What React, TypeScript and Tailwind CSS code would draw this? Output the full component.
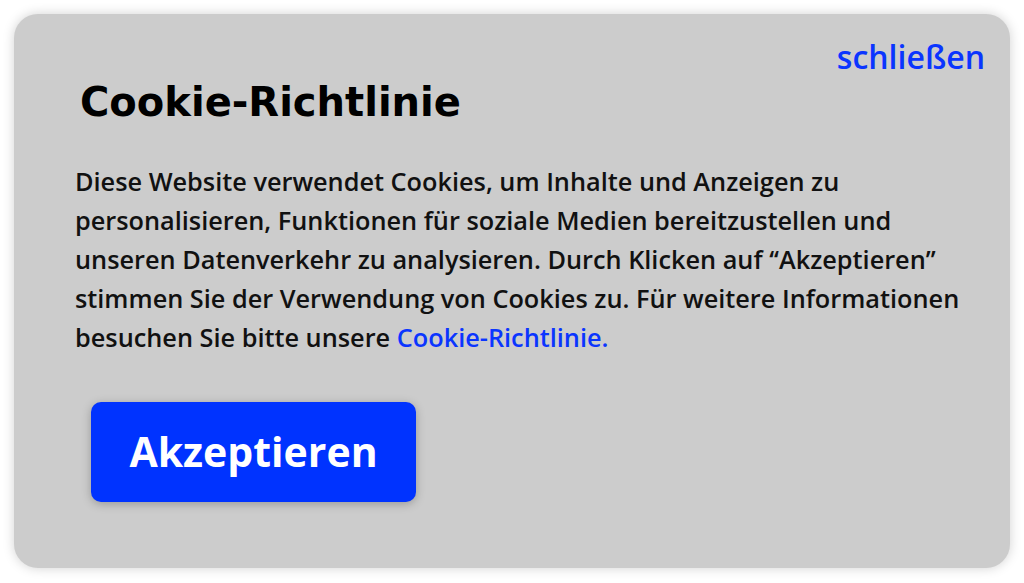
import React from "react";

const sans = { fontFamily: "'Open Sans', Lato, sans-serif" };
const wide = { fontFamily: "'DejaVu Sans', Verdana, sans-serif" };

const CookieBanner = () => (
  <div className="min-h-screen bg-white p-[14px]" style={sans}>
    <section className="h-[554px] rounded-[24px] bg-[#cccccc] shadow-[0_0_12px_rgba(0,0,0,0.18)] flex flex-col pl-[61px] pr-[25px] pt-[23px]">
      {/* Close */}
      <div className="flex justify-end">
        <button className="text-[32px] leading-[40px] text-[#0a35ff] font-semibold">
          schließen
        </button>
      </div>

      {/* Title */}
      <h1
        className="mt-[1px] pl-[5px] text-[40px] leading-[48px] font-bold text-black"
        style={wide}
      >
        Cookie-Richtlinie
      </h1>

      {/* Body */}
      <p className="mt-[36px] text-[25.3px] leading-[39px] font-semibold text-[#111]">
        Diese Website verwendet Cookies, um Inhalte und Anzeigen zu
        <br />
        personalisieren, Funktionen für soziale Medien bereitzustellen und
        <br />
        unseren Datenverkehr zu analysieren. Durch Klicken auf ‘‘Akzeptieren’’
        <br />
        stimmen Sie der Verwendung von Cookies zu. Für weitere Informationen
        <br />
        besuchen Sie bitte unsere{" "}
        <a className="text-[#0a35ff]">Cookie-Richtlinie.</a>
      </p>

      {/* Accept */}
      <div className="mt-[45px] pl-[16px]">
        <button className="w-[325px] h-[100px] rounded-[10px] bg-[#0033ff] text-white text-[41px] font-bold shadow-[0_2px_10px_rgba(0,0,0,0.25)]">
          Akzeptieren
        </button>
      </div>
    </section>
  </div>
);

export default function App() {
  return <CookieBanner />;
}
